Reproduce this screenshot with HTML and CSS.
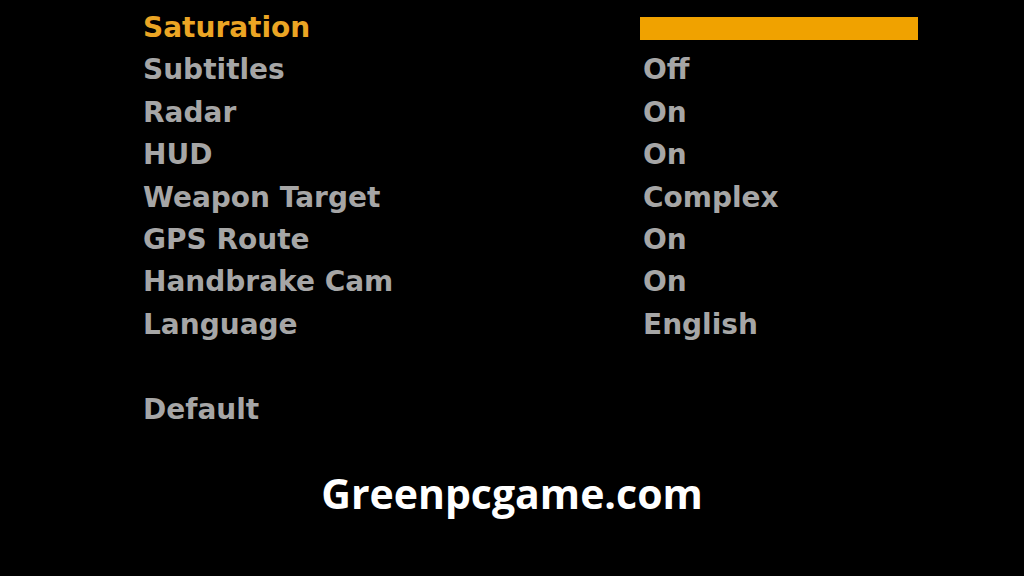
FILE: index.html
```html
<!DOCTYPE html>
<html>
<head>
<meta charset="utf-8">
<link rel="stylesheet" href="styles.css">
</head>
<body>
<div class="screen">
  <div class="menu">
    <div class="label active">Saturation</div><div class="value"><div class="bar"></div></div>
    <div class="label">Subtitles</div><div class="value">Off</div>
    <div class="label">Radar</div><div class="value">On</div>
    <div class="label">HUD</div><div class="value">On</div>
    <div class="label">Weapon Target</div><div class="value">Complex</div>
    <div class="label">GPS Route</div><div class="value">On</div>
    <div class="label">Handbrake Cam</div><div class="value">On</div>
    <div class="label">Language</div><div class="value">English</div>
    <div class="label spacer"></div><div class="value"></div>
    <div class="label">Default</div><div class="value"></div>
  </div>
  <div class="footer">Greenpcgame.com</div>
</div>
</body>
</html>
```
FILE: styles.css
```css
html, body {
  margin: 0;
  padding: 0;
  background: #000;
}
.screen {
  width: 1024px;
  height: 576px;
  background: #000;
  overflow: hidden;
}
.menu {
  display: grid;
  grid-template-columns: 497px 300px;
  grid-auto-rows: 42.4px;
  padding: 7px 0 0 143px;
  font-family: "DejaVu Sans", sans-serif;
  font-weight: bold;
  font-size: 28px;
  line-height: 42.4px;
  color: #a6a6a6;
}
.label {
  white-space: nowrap;
}
.label.active {
  color: #eba524;
}
.value {
  padding-left: 3px;
  white-space: nowrap;
  display: flex;
  align-items: center;
}
.bar {
  margin-left: -3px;
  margin-top: 1px;
  width: 278px;
  height: 23px;
  background: #f0a200;
}
.footer {
  margin-top: 36px;
  text-align: center;
  font-family: "Open Sans", sans-serif;
  font-weight: 700;
  font-size: 41px;
  line-height: 52px;
  color: #fff;
}
```
